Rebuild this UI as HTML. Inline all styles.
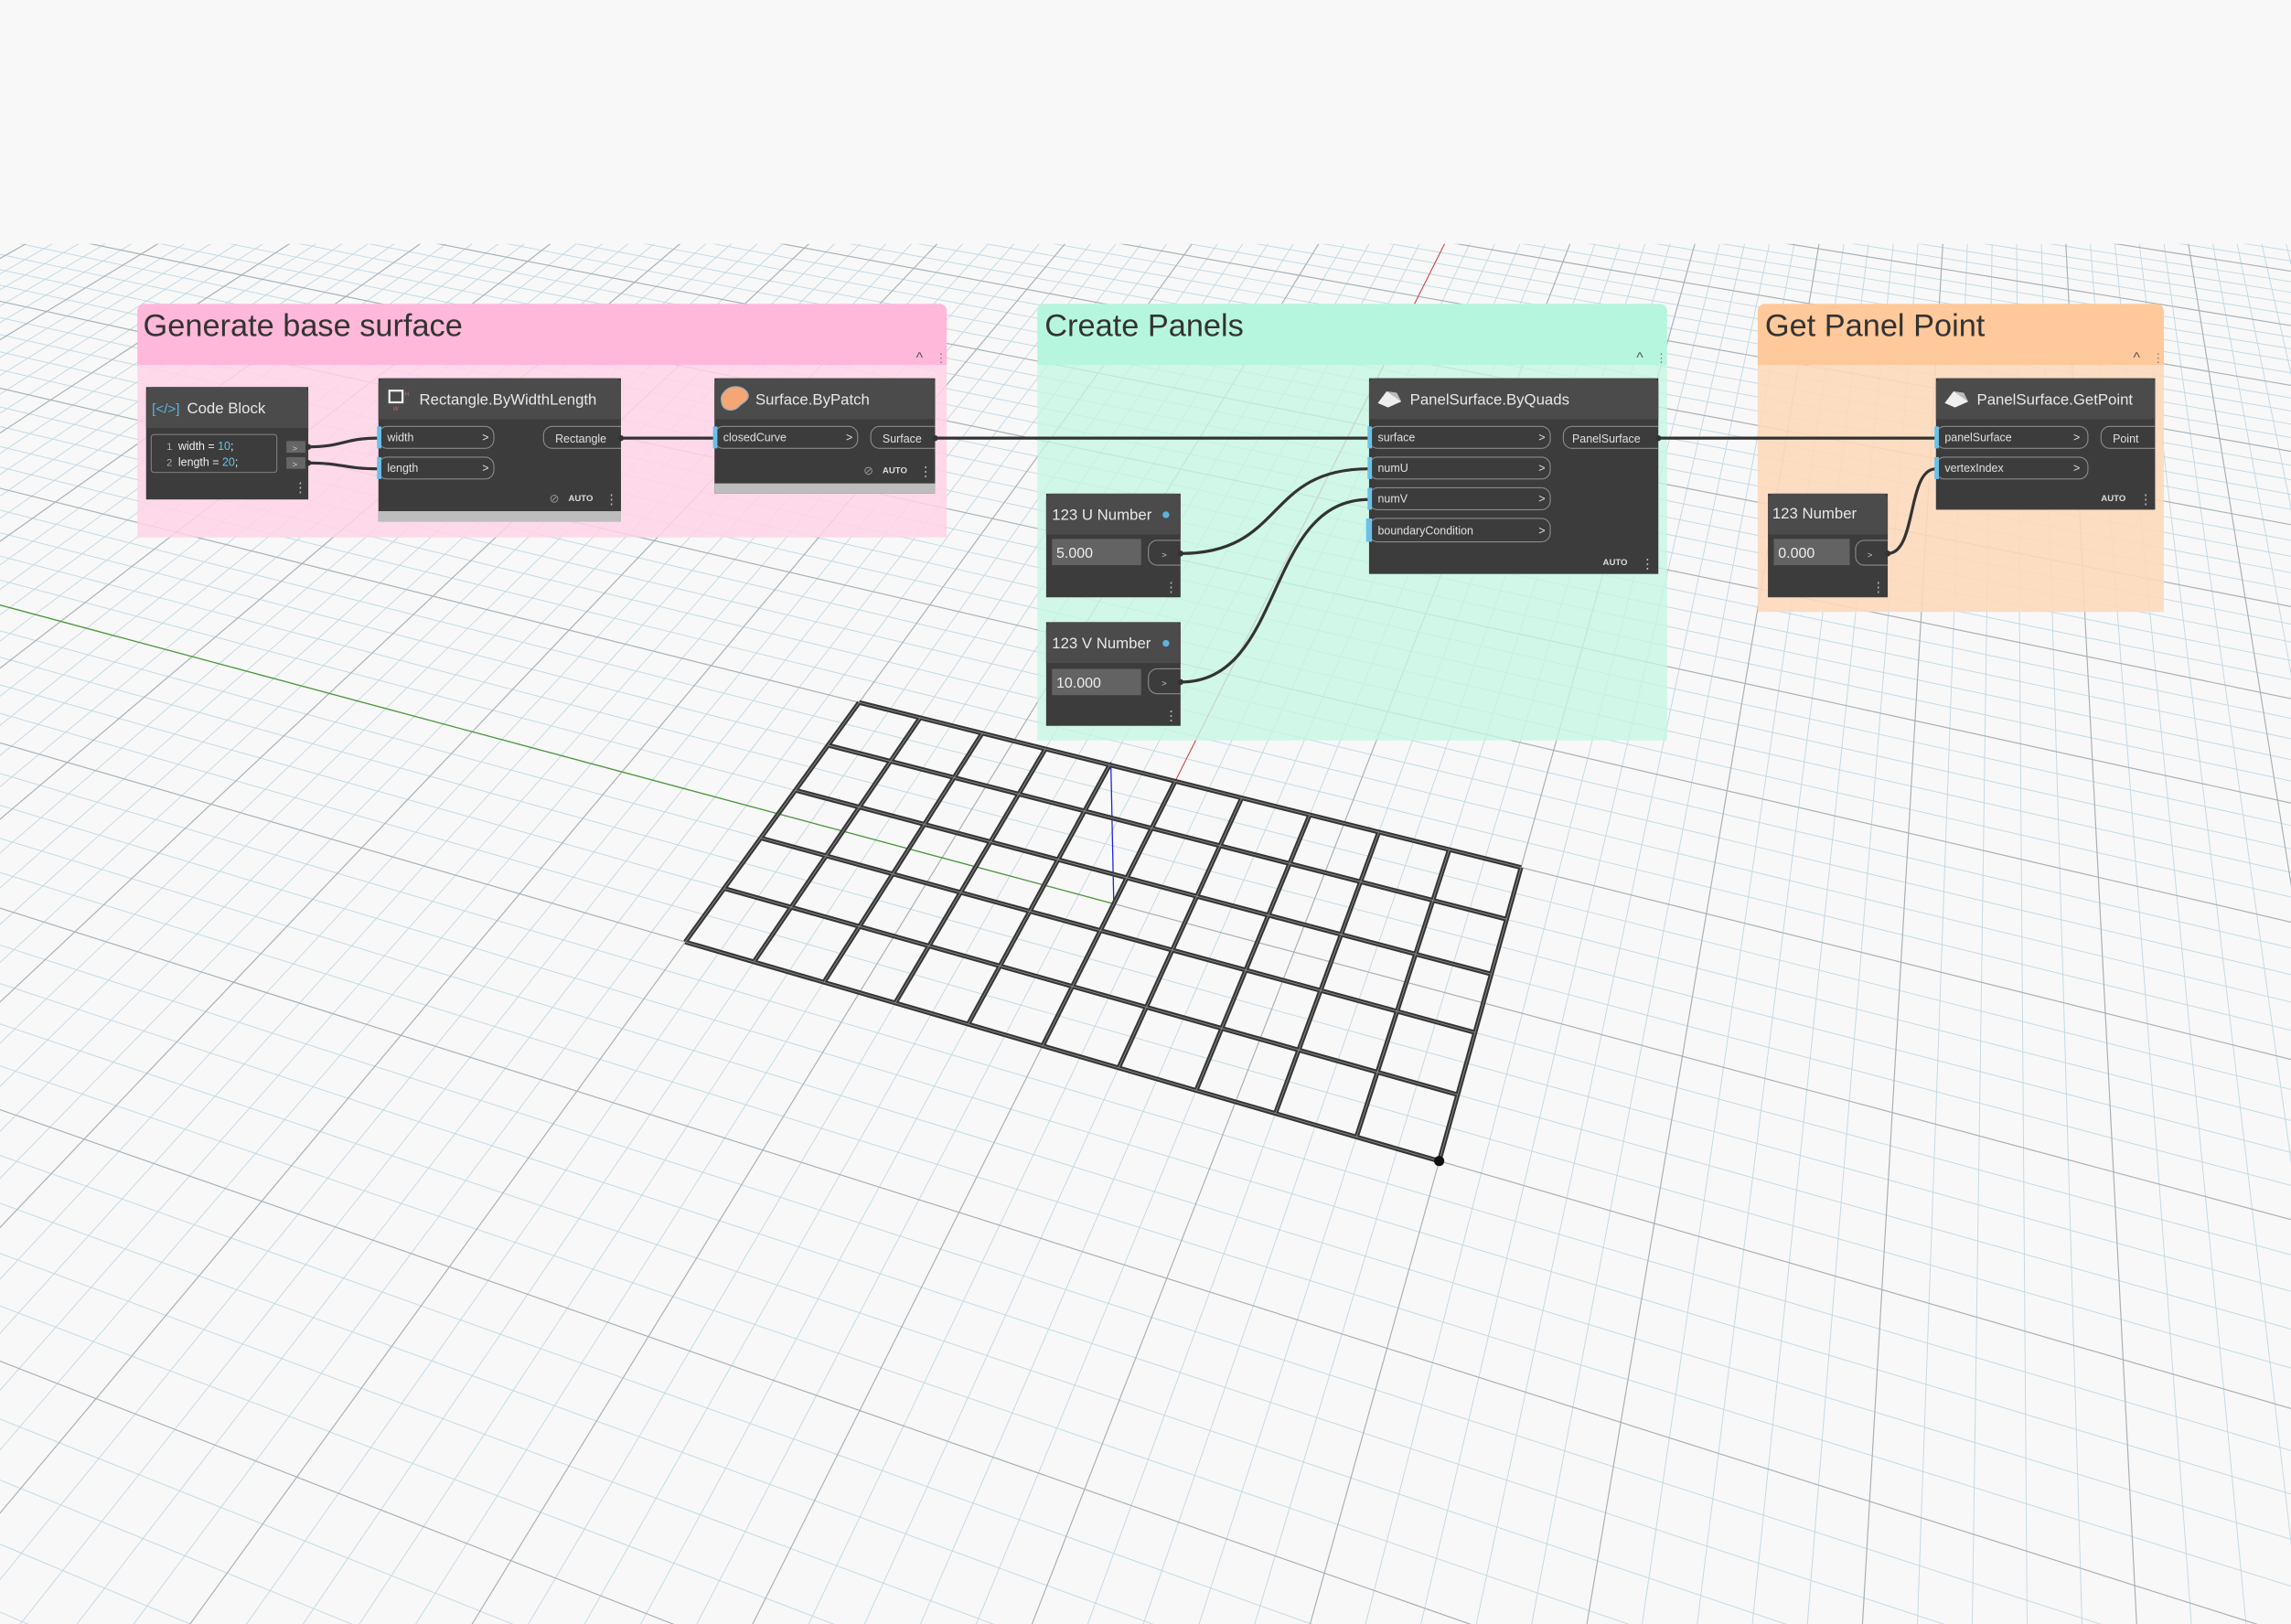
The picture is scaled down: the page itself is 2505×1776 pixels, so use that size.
<!DOCTYPE html>
<html><head><meta charset="utf-8">
<style>
html,body{margin:0;padding:0;background:#f8f8f8;width:2505px;height:1776px;overflow:hidden}
svg{display:block;overflow:hidden}
text{font-family:"Liberation Sans Narrow","Liberation Sans",sans-serif}
.h{fill:#e8e8e8;font-size:10.5px}
.p{fill:#e0e0e0;font-size:7.8px}
.pill{fill:none;stroke:#8a8a8a;stroke-width:0.7}
.bar{fill:#6ac0e8}
.w{fill:none;stroke:#333;stroke-width:2}
.gt{fill:#333;font-size:21.5px;font-family:"Liberation Sans",sans-serif}
.auto{fill:#ddd;font-size:6px;font-weight:bold}
.dots{fill:#bbb}
</style></head>
<body>
<svg width="2505" height="1776" viewBox="0 0 1568 1112" preserveAspectRatio="none" xmlns="http://www.w3.org/2000/svg">
<defs><clipPath id="gc"><rect x="0" y="167" width="1568" height="945"/></clipPath></defs>
<rect width="1568" height="1112" fill="#f8f8f8"/>
<g id="grid" clip-path="url(#gc)"></g>
<g id="axes" clip-path="url(#gc)"></g>
<g id="mesh"></g>

<!-- groups -->
<rect x="94" y="250" width="554" height="118" fill="#ffd3e7" opacity="0.85"/>
<path d="M94 250 V213 a5 5 0 0 1 5 -5 H643 a5 5 0 0 1 5 5 V250 Z" fill="#ffb8d9"/>
<text class="gt" x="98" y="230">Generate base surface</text>
<text x="627" y="248" fill="#555" font-size="10">^</text><text x="640" y="248" fill="#777" font-size="8">⋮</text>

<rect x="710" y="250" width="431" height="257" fill="#c5f6e2" opacity="0.8"/>
<path d="M710 250 V213 a5 5 0 0 1 5 -5 H1136 a5 5 0 0 1 5 5 V250 Z" fill="#b7f6de"/>
<text class="gt" x="715" y="230">Create Panels</text>
<text x="1120" y="248" fill="#555" font-size="10">^</text><text x="1133" y="248" fill="#777" font-size="8">⋮</text>

<rect x="1203" y="250" width="278" height="169" fill="#fcd9bb" opacity="0.9"/>
<path d="M1203 250 V213 a5 5 0 0 1 5 -5 H1476 a5 5 0 0 1 5 5 V250 Z" fill="#ffc99b"/>
<text class="gt" x="1208" y="230">Get Panel Point</text>
<text x="1460" y="248" fill="#555" font-size="10">^</text><text x="1473" y="248" fill="#777" font-size="8">⋮</text>

<!-- wires -->
<path class="w" d="M211 306 C235 306,235 300,259 300"/>
<path class="w" d="M211 317 C235 317,235 321,259 321"/>
<path class="w" d="M425 300 H489"/>
<path class="w" d="M640 300 H937"/>
<path class="w" d="M1135 300 H1325"/>
<path class="w" d="M808 379 C880 379,865 321,937 321"/>
<path class="w" d="M808 467 C880 467,865 342,937 342"/>
<path class="w" d="M1292 379 C1312 379,1305 321,1325 321"/>

<!-- Code Block -->
<rect x="100" y="265" width="111" height="77" fill="#3c3c3c"/>
<path d="M100 293 V269 a4 4 0 0 1 4 -4 H207 a4 4 0 0 1 4 4 V293Z" fill="#4b4b4b"/>
<text x="104" y="283" fill="#5ab4e0" font-size="9.5">[&lt;/&gt;]</text>
<text class="h" x="128" y="283">Code Block</text>
<rect x="103.5" y="297.5" width="86" height="26" rx="2" fill="none" stroke="#888" stroke-width="0.6"/>
<text x="114" y="308" fill="#aaa" font-size="7" font-family="Liberation Mono">1</text>
<text x="114" y="319" fill="#aaa" font-size="7" font-family="Liberation Mono">2</text>
<text x="122" y="308" fill="#eee" font-size="7.8" font-family="Liberation Mono">width = <tspan fill="#6ac0e8">10</tspan>;</text>
<text x="122" y="319" fill="#eee" font-size="7.8" font-family="Liberation Mono">length = <tspan fill="#6ac0e8">20</tspan>;</text>
<rect x="196" y="302" width="13" height="8" fill="#666"/><rect x="196" y="313" width="13" height="8" fill="#666"/>
<text x="200" y="309" fill="#ccc" font-size="6">&gt;</text><text x="200" y="320" fill="#ccc" font-size="6">&gt;</text>
<text class="dots" x="201" y="337" font-size="9">⋮</text>

<!-- Rectangle.ByWidthLength -->
<rect x="259" y="259" width="166" height="98" fill="#3c3c3c"/>
<rect x="259" y="350" width="166" height="7" fill="#bdbdbd"/>
<path d="M259 287 V263 a4 4 0 0 1 4 -4 H421 a4 4 0 0 1 4 4 V287Z" fill="#4b4b4b"/>
<rect x="266.5" y="267.5" width="9" height="8" fill="none" stroke="#eee" stroke-width="1.4"/>
<text x="277" y="271" fill="#c66" font-size="4">H</text><text x="269" y="281" fill="#c66" font-size="4">W</text>
<text class="h" x="287" y="277">Rectangle.ByWidthLength</text>
<rect class="pill" x="259" y="292" width="79" height="15" rx="6"/><rect class="bar" x="258" y="292" width="3" height="15"/>
<text class="p" x="265" y="302">width</text><text class="p" x="330" y="302">&gt;</text>
<rect class="pill" x="259" y="313" width="79" height="15" rx="6"/><rect class="bar" x="258" y="313" width="3" height="15"/>
<text class="p" x="265" y="323">length</text><text class="p" x="330" y="323">&gt;</text>
<path class="pill" d="M425 292 H378 a6 6 0 0 0 -6 6 V301 a6 6 0 0 0 6 6 H425"/>
<text class="p" x="380" y="303">Rectangle</text>
<text x="376" y="344" fill="#999" font-size="8">⊘</text><text class="auto" x="389" y="343">AUTO</text>
<text class="dots" x="414" y="345" font-size="9">⋮</text>

<!-- Surface.ByPatch -->
<rect x="489" y="259" width="151" height="79" fill="#3c3c3c"/>
<rect x="489" y="331" width="151" height="7" fill="#bdbdbd"/>
<path d="M489 287 V263 a4 4 0 0 1 4 -4 H636 a4 4 0 0 1 4 4 V287Z" fill="#4b4b4b"/>
<path d="M496 268 C500 263,510 264,512 270 C513 274,508 276,506 278 C503 282,495 282,494 276 C493 272,494 270,496 268Z" fill="#f4a774" stroke="#9ab" stroke-width="0.8"/>
<text class="h" x="517" y="277">Surface.ByPatch</text>
<rect class="pill" x="489" y="292" width="98" height="15" rx="6"/><rect class="bar" x="488" y="292" width="3" height="15"/>
<text class="p" x="495" y="302">closedCurve</text><text class="p" x="579" y="302">&gt;</text>
<path class="pill" d="M640 292 H602 a6 6 0 0 0 -6 6 V301 a6 6 0 0 0 6 6 H640"/>
<text class="p" x="604" y="303">Surface</text>
<text x="591" y="325" fill="#999" font-size="8">⊘</text><text class="auto" x="604" y="324">AUTO</text>
<text class="dots" x="629" y="326" font-size="9">⋮</text>

<!-- PanelSurface.ByQuads -->
<rect x="937" y="259" width="198" height="134" fill="#3c3c3c"/>
<path d="M937 287 V263 a4 4 0 0 1 4 -4 H1131 a4 4 0 0 1 4 4 V287Z" fill="#4b4b4b"/>
<path d="M943 276 L949 268 L956 269 L959 275 L950 279Z" fill="#eee"/><path d="M949 268 L956 269 L959 275Z" fill="#bbb"/>
<text class="h" x="965" y="277">PanelSurface.ByQuads</text>
<rect class="pill" x="937" y="292" width="124" height="15" rx="6"/><rect class="bar" x="936" y="292" width="3" height="15"/>
<text class="p" x="943" y="302">surface</text><text class="p" x="1053" y="302">&gt;</text>
<rect class="pill" x="937" y="313" width="124" height="15" rx="6"/><rect class="bar" x="936" y="313" width="3" height="15"/>
<text class="p" x="943" y="323">numU</text><text class="p" x="1053" y="323">&gt;</text>
<rect class="pill" x="937" y="334" width="124" height="15" rx="6"/><rect class="bar" x="936" y="334" width="3" height="15"/>
<text class="p" x="943" y="344">numV</text><text class="p" x="1053" y="344">&gt;</text>
<rect class="pill" x="937" y="355" width="124" height="16" rx="6"/><rect class="bar" x="935" y="355" width="4" height="16"/>
<text class="p" x="943" y="366">boundaryCondition</text><text class="p" x="1053" y="366">&gt;</text>
<path class="pill" d="M1135 292 H1076 a6 6 0 0 0 -6 6 V301 a6 6 0 0 0 6 6 H1135"/>
<text class="p" x="1076" y="303">PanelSurface</text>
<text class="auto" x="1097" y="387">AUTO</text>
<text class="dots" x="1123" y="389" font-size="9">⋮</text>

<!-- PanelSurface.GetPoint -->
<rect x="1325" y="259" width="150" height="90" fill="#3c3c3c"/>
<path d="M1325 287 V263 a4 4 0 0 1 4 -4 H1471 a4 4 0 0 1 4 4 V287Z" fill="#4b4b4b"/>
<path d="M1331 276 L1337 268 L1344 269 L1347 275 L1338 279Z" fill="#eee"/><path d="M1337 268 L1344 269 L1347 275Z" fill="#bbb"/>
<text class="h" x="1353" y="277">PanelSurface.GetPoint</text>
<rect class="pill" x="1325" y="292" width="104" height="15" rx="6"/><rect class="bar" x="1324" y="292" width="3" height="15"/>
<text class="p" x="1331" y="302">panelSurface</text><text class="p" x="1419" y="302">&gt;</text>
<rect class="pill" x="1325" y="313" width="104" height="15" rx="6"/><rect class="bar" x="1324" y="313" width="3" height="15"/>
<text class="p" x="1331" y="323">vertexIndex</text><text class="p" x="1419" y="323">&gt;</text>
<path class="pill" d="M1475 292 H1444 a6 6 0 0 0 -6 6 V301 a6 6 0 0 0 6 6 H1475"/>
<text class="p" x="1446" y="303">Point</text>
<text class="auto" x="1438" y="343">AUTO</text>
<text class="dots" x="1464" y="345" font-size="9">⋮</text>

<!-- U Number -->
<rect x="716" y="338" width="92" height="71" fill="#3c3c3c"/>
<path d="M716 366 V342 a4 4 0 0 1 4 -4 H804 a4 4 0 0 1 4 4 V366Z" fill="#4b4b4b"/>
<text class="h" x="720" y="356">123  U Number</text><circle cx="798" cy="352.5" r="2.3" fill="#5ab4e0"/>
<rect x="720" y="369" width="61" height="18" fill="#636363"/>
<text x="723" y="382" fill="#eee" font-size="10">5.000</text>
<path class="pill" d="M808 370 H792 a6 6 0 0 0 -6 6 V381 a6 6 0 0 0 6 6 H808"/><text x="795" y="382" fill="#ccc" font-size="6">&gt;</text>
<text class="dots" x="797" y="405" font-size="9">⋮</text>

<!-- V Number -->
<rect x="716" y="426" width="92" height="71" fill="#3c3c3c"/>
<path d="M716 454 V430 a4 4 0 0 1 4 -4 H804 a4 4 0 0 1 4 4 V454Z" fill="#4b4b4b"/>
<text class="h" x="720" y="444">123  V Number</text><circle cx="798" cy="440.5" r="2.3" fill="#5ab4e0"/>
<rect x="720" y="458" width="61" height="18" fill="#636363"/>
<text x="723" y="471" fill="#eee" font-size="10">10.000</text>
<path class="pill" d="M808 458 H792 a6 6 0 0 0 -6 6 V469 a6 6 0 0 0 6 6 H808"/><text x="795" y="470" fill="#ccc" font-size="6">&gt;</text>
<text class="dots" x="797" y="493" font-size="9">⋮</text>

<!-- Number -->
<rect x="1210" y="338" width="82" height="71" fill="#3c3c3c"/>
<path d="M1210 366 V342 a4 4 0 0 1 4 -4 H1288 a4 4 0 0 1 4 4 V366Z" fill="#4b4b4b"/>
<text class="h" x="1213" y="355">123  Number</text>
<rect x="1214" y="369" width="52" height="18" fill="#636363"/>
<text x="1217" y="382" fill="#eee" font-size="10">0.000</text>
<path class="pill" d="M1292 370 H1276 a6 6 0 0 0 -6 6 V381 a6 6 0 0 0 6 6 H1292"/><text x="1278" y="382" fill="#ccc" font-size="6">&gt;</text>
<text class="dots" x="1281" y="405" font-size="9">⋮</text>

<!-- port dots -->
<g fill="#333">
<circle cx="211" cy="306" r="2"/><circle cx="211" cy="317" r="2"/><circle cx="425" cy="300" r="2"/><circle cx="640" cy="300" r="2"/>
<circle cx="1135" cy="300" r="2"/><circle cx="808" cy="379" r="2"/><circle cx="808" cy="467" r="2"/><circle cx="1292" cy="379" r="2"/>
</g>
</svg>
<script>
(function(){
var NS="http://www.w3.org/2000/svg";
var W=[[-10,5],[10,5],[10,-5],[-10,-5]],S=[[588,481],[1041,594],[985,795],[469,645]];
var A=[],b=[];
for(var i=0;i<4;i++){var X=W[i][0],Y=W[i][1],x=S[i][0],y=S[i][1];
A.push([X,Y,1,0,0,0,-x*X,-x*Y]);b.push(x);
A.push([0,0,0,X,Y,1,-y*X,-y*Y]);b.push(y);}
var n=8;for(var c=0;c<n;c++){var p=c;for(var r=c+1;r<n;r++)if(Math.abs(A[r][c])>Math.abs(A[p][c]))p=r;
var t=A[c];A[c]=A[p];A[p]=t;t=b[c];b[c]=b[p];b[p]=t;
for(var r=0;r<n;r++){if(r==c)continue;var f=A[r][c]/A[c][c];for(var k=c;k<n;k++)A[r][k]-=f*A[c][k];b[r]-=f*b[c];}}
var h=[];for(var i=0;i<n;i++)h.push(b[i]/A[i][i]);
function wv(X,Y){return h[6]*X+h[7]*Y+1;}
function P(X,Y){var w=wv(X,Y);return [(h[0]*X+h[1]*Y+h[2])/w,(h[3]*X+h[4]*Y+h[5])/w];}
function line(g,X0,Y0,X1,Y1,col,sw){
var w0=wv(X0,Y0),w1=wv(X1,Y1),m=0.06;
if(w0<m&&w1<m)return;
if(w0<m){var t=(m-w0)/(w1-w0);X0=X0+(X1-X0)*t;Y0=Y0+(Y1-Y0)*t;}
if(w1<m){var t=(m-w1)/(w0-w1);X1=X1+(X0-X1)*t;Y1=Y1+(Y0-Y1)*t;}
var a=P(X0,Y0),c=P(X1,Y1);var l=document.createElementNS(NS,"line");
l.setAttribute("x1",a[0].toFixed(1));l.setAttribute("y1",a[1].toFixed(1));l.setAttribute("x2",c[0].toFixed(1));l.setAttribute("y2",c[1].toFixed(1));
l.setAttribute("stroke",col);l.setAttribute("stroke-width",sw);g.appendChild(l);}
var g=document.getElementById("grid"),R=160;
for(var pass=0;pass<2;pass++)for(var k=-R;k<=R;k++){var maj=(k%5==0);if((pass==1)!=maj)continue;
var col=maj?"#a9b1b7":"#c3d9e4",sw=maj?0.75:0.6;
line(g,-R,k,R,k,col,sw);line(g,k,-R,k,R,col,sw);}
var ax=document.getElementById("axes");
line(ax,-R,0,0,0,"#4a9a3a",0.8);
line(ax,0,5,0,R,"#e04040",0.6);
line(ax,0,0,0,5,"#8a0f0f",2.2);
var o=P(0,0);var z=document.createElementNS(NS,"line");z.setAttribute("x1",o[0]);z.setAttribute("y1",o[1]);z.setAttribute("x2",o[0]-2);z.setAttribute("y2",o[1]-97);z.setAttribute("stroke","#2020e0");z.setAttribute("stroke-width","0.8");ax.appendChild(z);
var ms=document.getElementById("mesh");
for(var pass=0;pass<2;pass++){var col=pass?"#8a8a8a":"#353535",sw=pass?0.6:3.2;
for(var X=-10;X<=10;X+=2)line(ms,X,-5,X,5,col,sw);
for(var Y=-5;Y<=5;Y+=2)line(ms,-10,Y,10,Y,col,sw);}
var pt=P(10,-5);var cc=document.createElementNS(NS,"circle");cc.setAttribute("cx",pt[0]);cc.setAttribute("cy",pt[1]);cc.setAttribute("r","3.5");cc.setAttribute("fill","#111");ms.appendChild(cc);
})();
</script>
</body></html>
